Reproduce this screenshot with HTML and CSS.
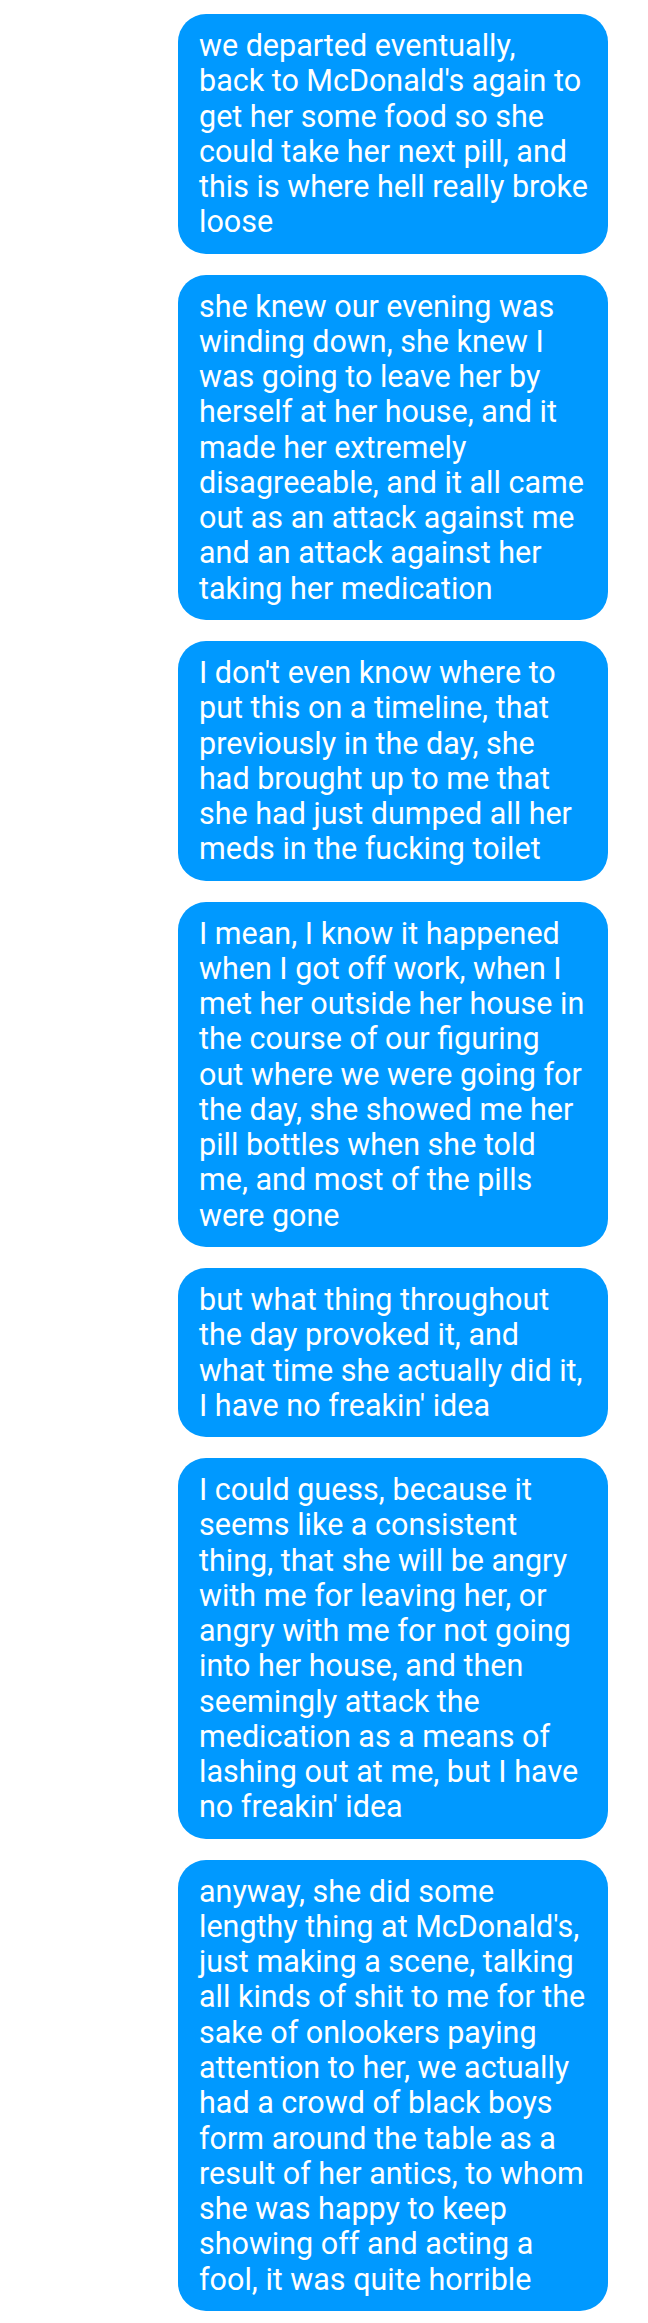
FILE: index.html
```html
<!DOCTYPE html>
<html lang="en">
<head>
<meta charset="utf-8">
<title>Messages</title>
<link rel="stylesheet" href="styles.css">
</head>
<body>
<main class="thread">
  <div class="bubble">we departed eventually, back to McDonald's again to get her some food so she could take her next pill, and this is where hell really broke loose</div>
  <div class="bubble">she knew our evening was winding down, she knew I was going to leave her by herself at her house, and it made her extremely disagreeable, and it all came out as an attack against me and an attack against her taking her medication</div>
  <div class="bubble">I don't even know where to put this on a timeline, that previously in the day, she had brought up to me that she had just dumped all her meds in the fucking toilet</div>
  <div class="bubble">I mean, I know it happened when I got off work, when I met her outside her house in the course of our figuring out where we were going for the day, she showed me her pill bottles when she told me, and most of the pills were gone</div>
  <div class="bubble">but what thing throughout the day provoked it, and what time she actually did it, I have no freakin' idea</div>
  <div class="bubble">I could guess, because it seems like a consistent thing, that she will be angry with me for leaving her, or angry with me for not going into her house, and then seemingly attack the medication as a means of lashing out at me, but I have no freakin' idea</div>
  <div class="bubble">anyway, she did some lengthy thing at McDonald's, just making a scene, talking all kinds of shit to me for the sake of onlookers paying attention to her, we actually had a crowd of black boys form around the table as a result of her antics, to whom she was happy to keep showing off and acting a fool, it was quite horrible</div>
</main>
</body>
</html>
```
FILE: styles.css
```css
html, body {
  margin: 0;
  padding: 0;
  background: #ffffff;
}

.thread {
  display: flex;
  flex-direction: column;
  align-items: flex-start;
  gap: 21px;
  padding: 14px 0 12px 178px;
}

.bubble {
  box-sizing: border-box;
  width: 430px;
  padding: 14px 20px 14px 21px;
  border-radius: 28px;
  background: #0099ff;
  color: #ffffff;
  font-family: Roboto, "Noto Sans", sans-serif;
  font-size: 30.5px;
  line-height: 35.26px;
}
```
